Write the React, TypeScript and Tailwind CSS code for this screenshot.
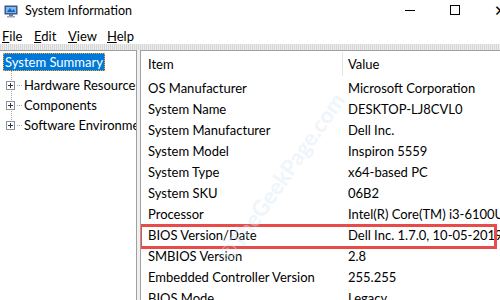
import React from 'react';

const rows: [string, string][] = [
  ['OS Manufacturer', 'Microsoft Corporation'],
  ['System Name', 'DESKTOP-LJ8CVL0'],
  ['System Manufacturer', 'Dell Inc.'],
  ['System Model', 'Inspiron 5559'],
  ['System Type', 'x64-based PC'],
  ['System SKU', '06B2'],
  ['Processor', 'Intel(R) Core(TM) i3-6100U CPU @ 2.30GHz'],
  ['BIOS Version/Date', 'Dell Inc. 1.7.0, 10-05-2019'],
  ['SMBIOS Version', '2.8'],
  ['Embedded Controller Version', '255.255'],
  ['BIOS Mode', 'Legacy'],
];

const tree = ['Hardware Resources', 'Components', 'Software Environment'];

const AppIcon = () => (
  <svg width="14" height="13" viewBox="0 0 14 13">
    <rect x="1" y="1" width="12" height="8" fill="#2a6fc9" stroke="#3c4f6e" />
    <rect x="2" y="2" width="10" height="6" fill="#7db7f0" />
    <path d="M3 7 L6 3 L8 6 L10 4 L11 7 Z" fill="#1a5fb4" />
    <rect x="5" y="9" width="4" height="2" fill="#6f7d8f" />
    <rect x="3" y="11" width="8" height="1.5" fill="#9aa6b4" />
  </svg>
);

const PlusBox = () => (
  <span className="w-[9px] h-[9px] border border-[#919191] bg-white flex items-center justify-center relative">
    <span className="absolute w-[5px] h-px bg-[#1e395b]" />
    <span className="absolute w-px h-[5px] bg-[#1e395b]" />
  </span>
);

export default function App() {
  return (
    <div
      className="w-[500px] h-[300px] overflow-hidden bg-white flex flex-col text-[#000]"
      style={{ fontFamily: 'Lato, "Noto Sans", sans-serif' }}
    >
      {/* title bar */}
      <div className="h-[29px] shrink-0 flex items-center">
        <div className="pl-[4px] pr-[7px] -mt-[6px]">
          <AppIcon />
        </div>
        <span className="text-[12.5px] leading-none -mt-[6px]">System Information</span>
        <div className="ml-auto flex items-center h-full">
          <span className="w-[10px] h-px bg-black mr-[35px] -mt-[9px]" />
          <span className="w-[10px] h-[10px] border border-black mr-[34px] -mt-[9px]" />
          <span className="text-[15px] font-light leading-none -mt-[9px] w-[6px] overflow-hidden">✕</span>
        </div>
      </div>

      {/* menu */}
      <div className="h-[15px] shrink-0 flex items-center text-[13px] leading-none">
        <span className="pl-[2px] w-[34px]"><u>F</u>ile</span>
        <span className="w-[34px]"><u>E</u>dit</span>
        <span className="w-[39px]"><u>V</u>iew</span>
        <span><u>H</u>elp</span>
      </div>

      {/* dithered strip */}
      <div
        className="h-[6px] shrink-0 bg-[#e3e3e3]"
        style={{ backgroundImage: 'repeating-linear-gradient(90deg,#d6d6d6 0 1px,#ececec 1px 2px)' }}
      />

      <div className="flex flex-1 min-h-0 bg-[#f0f0f0]">
        {/* left tree */}
        <div className="w-[137px] shrink-0 bg-white border-t border-r border-[#a0a0a0] pt-[2px] pl-[3px] text-[13px] relative overflow-hidden">
          <div className="inline-block bg-[#0078d7] text-white px-[2px] h-[18px] leading-[18px] outline-1 outline-dotted outline-[#f5a623] -outline-offset-1 whitespace-nowrap">
            System Summary
          </div>
          <div className="absolute left-[11px] top-[20px] h-[55px] border-l border-dotted border-[#a0a0a0]" />
          <div className="mt-[3px]">
            {tree.map((t) => (
              <div key={t} className="flex items-center h-[20px] whitespace-nowrap">
                <div className="w-[14px] shrink-0 flex justify-center pl-[1px]">
                  <PlusBox />
                </div>
                <span className="w-[5px] shrink-0 border-t border-dotted border-[#a0a0a0] mr-[2px]" />
                <span>{t}</span>
              </div>
            ))}
          </div>
        </div>

        {/* right list */}
        <div className="flex-1 ml-[3px] bg-white border-t border-l border-[#a0a0a0] relative overflow-hidden text-[13px]">
          <div className="flex h-[27px] items-center pt-px">
            <span className="w-[201px] pl-[7px]">Item</span>
            <span className="border-l border-[#e5e5e5] h-[24px] mr-[5px] self-start" />
            <span>Value</span>
          </div>
          {rows.map(([k, v]) => (
            <div key={k} className="flex h-[21px] items-center whitespace-nowrap">
              <span className="w-[207px] shrink-0 pl-[7px]">{k}</span>
              <span>{v}</span>
            </div>
          ))}
          <div className="absolute left-[-2px] top-[173px] w-[358px] h-[25px] border-[3px] border-[#e94a4a] pointer-events-none" />
          <div className="absolute left-[40px] top-[110px] -rotate-[55deg] text-[22px] font-bold text-[#d6e7f7] opacity-40 pointer-events-none whitespace-nowrap">
            ©TheGeekPage.com
          </div>
        </div>
      </div>
    </div>
  );
}
